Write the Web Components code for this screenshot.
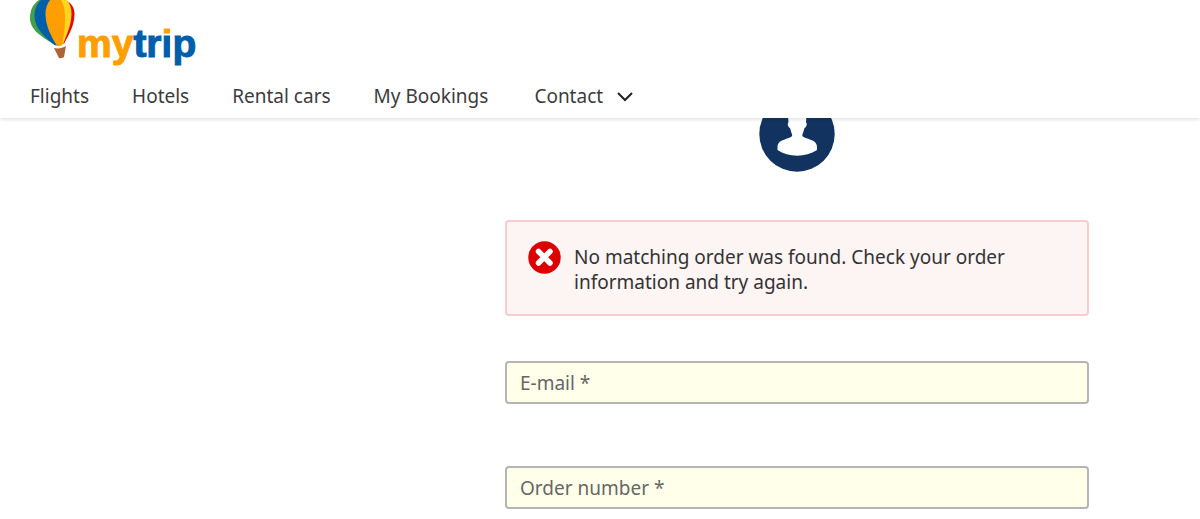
<!DOCTYPE html>
<html lang="en">
<head>
<meta charset="utf-8">
<meta name="viewport" content="width=device-width, initial-scale=1">
<title>Mytrip - My Bookings</title>
<style>
    body {
        margin: 0;
        background: #fff;
        color: #333;
        font-family: "Noto Sans", "Open Sans", sans-serif;
        font-size: 19px;
        line-height: 25px;
    }
</style>
</head>
<body>
<mytrip-header></mytrip-header>
<booking-login>
    <user-avatar></user-avatar>
    <error-message>No matching order was found. Check your order information and try again.</error-message>
    <form-field name="email" type="email" label="E-mail *"></form-field>
    <form-field name="order" type="text" label="Order number *"></form-field>
</booking-login>

<script>
class MytripLogo extends HTMLElement {
    constructor() {
        super();
        this.attachShadow({ mode: 'open' });
    }

    connectedCallback() {
        this.shadowRoot.innerHTML = `
            <style>
                :host {
                    display: block;
                }

                a {
                    display: flex;
                    align-items: flex-start;
                    gap: 2px;
                    text-decoration: none;
                }

                svg {
                    display: block;
                }

                .name {
                    padding-top: 22px;
                    color: #005eab;
                    font: bold 39px/44px "Liberation Sans", Arial, sans-serif;
                    -webkit-text-stroke: 1px;
                }

                .my {
                    color: #ff9e00;
                }

                /* orange dot over a blue stem */
                .dot {
                    color: transparent;
                    background: linear-gradient(#ff9e00 13px, #005eab 13px);
                    -webkit-background-clip: text;
                    background-clip: text;
                }
            </style>

            <a href="#home" aria-label="mytrip">
                <svg width="45" height="59" viewBox="0 0 45 59" aria-hidden="true">
                    <path fill="#43a047" d="M9 0C3 4 0 10 0 18c0 12 12 19 25 27L14 0Z"/>
                    <path fill="#e30613" d="M35 0c7 3 9.500 8 9.500 14 0 12-6 21-10.500 30l-2-1Z"/>
                    <path fill="#ffd51e" d="M29 0h8c3 4 4.500 8 4.500 14 0 11-5 21-8.500 30.500L29 46Z"/>
                    <path fill="#005eab" d="M11 0C7 4 4.500 9 4.500 16c0 12 10 21 20 29l4 1L24 0Z"/>
                    <path fill="#ff9e00" d="M20 0c-3 4-4.500 8-4.500 14 0 12 6 23 11.500 32l5-.5c2-9 3-19 3-28 0-7-1-13-4-17.500Z"/>
                    <path fill="#ad6336" d="M24 48c4.500 1 8.500 0 12-2l-2 11c-1 1-3 1.500-5 1Z"/>
                </svg>
                <span class="name"><span class="my">my</span>tr<span class="dot">i</span>p</span>
            </a>
        `;
    }
}

class MytripHeader extends HTMLElement {
    constructor() {
        super();
        this.attachShadow({ mode: 'open' });
    }

    connectedCallback() {
        this.shadowRoot.innerHTML = `
            <style>
                :host {
                    display: block;
                    position: sticky;
                    top: 0;
                    z-index: 10;
                    background: #fff;
                    box-shadow: 0 1px 4px rgba(0, 0, 0, 0.15);
                }

                header {
                    padding: 0 30px 9px;
                }

                mytrip-logo {
                    height: 84px;
                }

                ul {
                    display: flex;
                    gap: 43px;
                    margin: 0;
                    padding: 0;
                    list-style: none;
                }

                a,
                button {
                    color: #3c3c3c;
                    font: inherit;
                    text-decoration: none;
                }

                button {
                    display: flex;
                    align-items: center;
                    gap: 14px;
                    padding: 0 0 0 3px;
                    border: 0;
                    background: none;
                    cursor: pointer;
                }

                a:hover,
                button:hover {
                    color: #005eab;
                }
            </style>

            <header>
                <mytrip-logo></mytrip-logo>
                <nav>
                    <ul>
                        <li><a href="#flights">Flights</a></li>
                        <li><a href="#hotels">Hotels</a></li>
                        <li><a href="#cars">Rental cars</a></li>
                        <li><a href="#bookings">My Bookings</a></li>
                        <li>
                            <button type="button" aria-haspopup="true">Contact
                                <svg width="16" height="10" viewBox="0 0 16 10" aria-hidden="true">
                                    <path d="M1 1l7 7 7-7" fill="none" stroke="#222" stroke-width="2"/>
                                </svg>
                            </button>
                        </li>
                    </ul>
                </nav>
            </header>
        `;
    }
}

class BookingLogin extends HTMLElement {
    constructor() {
        super();
        this.attachShadow({ mode: 'open' });
    }

    connectedCallback() {
        this.shadowRoot.innerHTML = `
            <style>
                :host {
                    display: block;
                }

                /* the column starts partly under the sticky header */
                main {
                    margin: -22px 111px 0 505px;
                }

                form {
                    display: flex;
                    flex-direction: column;
                }

                ::slotted(error-message) {
                    margin: 48px 0 45px;
                }

                ::slotted(form-field) {
                    margin-bottom: 62px;
                }

                ::slotted(form-field:last-child) {
                    margin-bottom: 10px;
                }

                @media (max-width: 900px) {
                    main {
                        margin-left: 30px;
                        margin-right: 30px;
                    }
                }
            </style>

            <main>
                <form>
                    <slot></slot>
                </form>
            </main>
        `;
    }
}

class UserAvatar extends HTMLElement {
    constructor() {
        super();
        this.attachShadow({ mode: 'open' });
    }

    connectedCallback() {
        this.shadowRoot.innerHTML = `
            <style>
                :host {
                    display: flex;
                    justify-content: center;
                }

                svg {
                    display: block;
                }
            </style>

            <svg width="76" height="76" viewBox="0 0 76 76" aria-hidden="true">
                <circle cx="38" cy="38" r="37.700" fill="#12335f"/>
                <path fill="#fff" d="M38 7c-7 0-10 5-9 13l.5 6-.8 2c.2 2 1 3.500 2.300 4l1.500 5c1 2 1 3-.5 4-6 3-13.500 3-13.500 10v3c11 7.500 28 7.500 39.500 0v-3c0-7-7.500-7-13.500-10-1.500-1-1.500-2-.5-4l1.500-5c1.300-.5 2.100-2 2.300-4l-.8-2 .5-6c1-8-2-13-9-13Z"/>
            </svg>
        `;
    }
}

class ErrorMessage extends HTMLElement {
    constructor() {
        super();
        this.attachShadow({ mode: 'open' });
    }

    connectedCallback() {
        this.shadowRoot.innerHTML = `
            <style>
                :host {
                    display: block;
                }

                div {
                    display: flex;
                    align-items: flex-start;
                    gap: 13px;
                    padding: 19px 76px 17px 21px;
                    border: 2px solid #f8cccc;
                    border-radius: 4px;
                    background: #fdf4f4;
                }

                svg {
                    flex: none;
                }

                p {
                    margin: 0;
                    padding: 4px 0 2px;
                }
            </style>

            <div role="alert">
                <svg width="33" height="33" viewBox="0 0 33 33" aria-hidden="true">
                    <circle cx="16.500" cy="16.500" r="16.200" fill="#dc0000"/>
                    <path d="M10.500 10.500l11.500 11.500M22 10.500l-11.500 11.500" stroke="#fff" stroke-width="5.500" stroke-linecap="round"/>
                </svg>
                <p><slot></slot></p>
            </div>
        `;
    }
}

class FormField extends HTMLElement {
    constructor() {
        super();
        this.attachShadow({ mode: 'open' });
    }

    connectedCallback() {
        const name = this.getAttribute('name');
        const type = this.getAttribute('type');
        const label = this.getAttribute('label');

        this.shadowRoot.innerHTML = `
            <style>
                :host {
                    display: block;
                }

                input {
                    display: block;
                    box-sizing: border-box;
                    width: 100%;
                    height: 43px;
                    margin: 0;
                    padding: 0 13px;
                    border: 2px solid #b5b5b5;
                    border-radius: 4px;
                    background: #ffffea;
                    color: #333;
                    font: inherit;
                }

                input::placeholder {
                    color: #666;
                    opacity: 1;
                }

                input:focus {
                    outline: none;
                    border-color: #005eab;
                }
            </style>

            <input id="${name}" name="${name}" type="${type}" placeholder="${label}" aria-label="${label}" required>
        `;
    }
}

customElements.define('mytrip-logo', MytripLogo);
customElements.define('mytrip-header', MytripHeader);
customElements.define('booking-login', BookingLogin);
customElements.define('user-avatar', UserAvatar);
customElements.define('error-message', ErrorMessage);
customElements.define('form-field', FormField);
</script>
</body>
</html>
